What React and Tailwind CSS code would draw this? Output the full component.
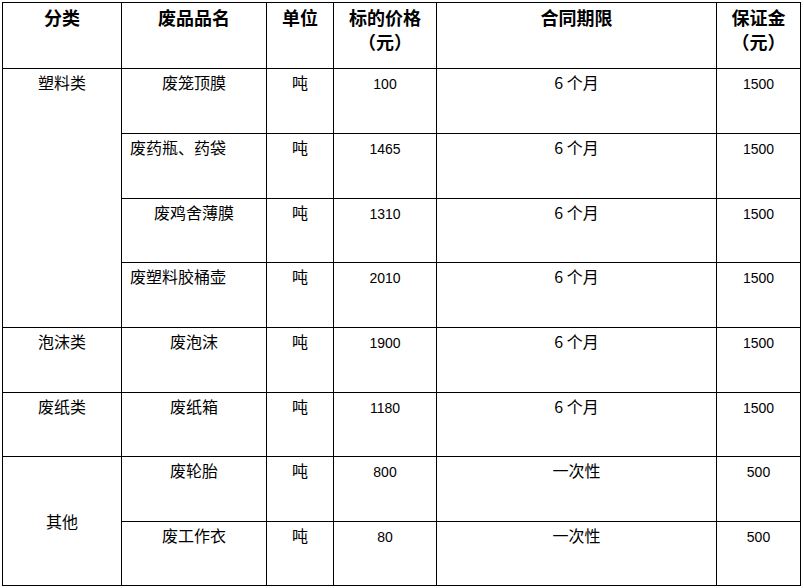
const rows = [
  { name: "废笼顶膜", price: "100", term: "6 个月", deposit: "1500" },
  { name: "废药瓶、药袋", price: "1465", term: "6 个月", deposit: "1500", left: true },
  { name: "废鸡舍薄膜", price: "1310", term: "6 个月", deposit: "1500" },
  { name: "废塑料胶桶壶", price: "2010", term: "6 个月", deposit: "1500", left: true },
];

const head = "bg-white pt-[2px] text-center text-[18px] leading-[24px] font-bold";
const cell = "bg-white pt-[3px] text-center text-[16px] leading-[20px]";
const num = "bg-white pt-[6px] text-center text-[14px] leading-[18px] font-['Liberation_Sans',sans-serif]";

function Row({ item }) {
  return (
    <>
      <div className={item.left ? "bg-white pt-[3px] pl-[8px] text-left text-[16px] leading-[20px]" : cell}>
        {item.name}
      </div>
      <div className={cell}>吨</div>
      <div className={num}>{item.price}</div>
      <div className={cell}>{item.term}</div>
      <div className={num}>{item.deposit}</div>
    </>
  );
}

export default function App() {
  return (
    <div className="w-[804px] h-[588px] bg-white font-['Noto_Sans_CJK_SC',sans-serif] text-black">
      <div className="ml-[2px] mt-[2px] w-[799px] grid grid-cols-[118px_144px_66px_102px_279px_83px] grid-rows-[65px_64px_64px_63px_64px_64px_63px_64px_63px] gap-px bg-black p-px">
        <div className={head}>分类</div>
        <div className={head}>废品品名</div>
        <div className={head}>单位</div>
        <div className={head}>
          标的价格
          <br />
          （元）
        </div>
        <div className={head}>合同期限</div>
        <div className={head}>
          保证金
          <br />
          （元）
        </div>

        <div className={cell + " row-span-4"}>塑料类</div>
        <Row item={rows[0]} />
        <Row item={rows[1]} />
        <Row item={rows[2]} />
        <Row item={rows[3]} />

        <div className={cell}>泡沫类</div>
        <Row item={{ name: "废泡沫", price: "1900", term: "6 个月", deposit: "1500" }} />

        <div className={cell}>废纸类</div>
        <Row item={{ name: "废纸箱", price: "1180", term: "6 个月", deposit: "1500" }} />

        <div className="bg-white row-span-2 flex items-center justify-center text-[16px] leading-[20px]">其他</div>
        <Row item={{ name: "废轮胎", price: "800", term: "一次性", deposit: "500" }} />
        <Row item={{ name: "废工作衣", price: "80", term: "一次性", deposit: "500" }} />
      </div>
    </div>
  );
}
